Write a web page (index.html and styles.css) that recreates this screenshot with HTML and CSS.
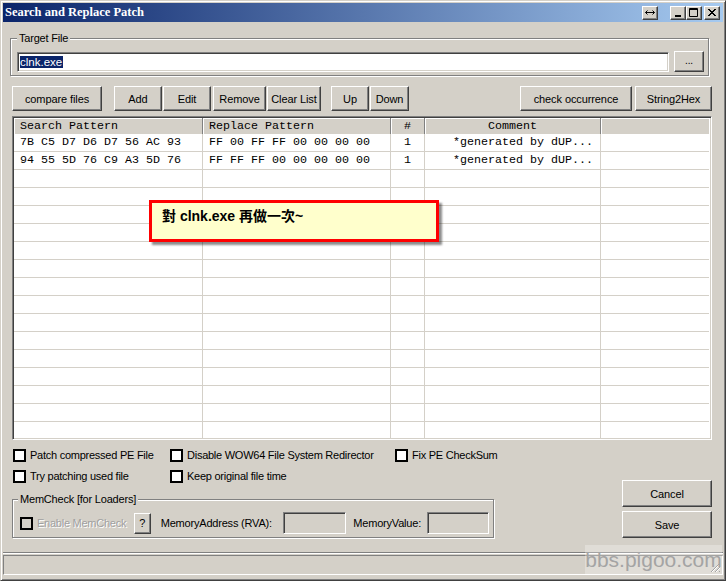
FILE: index.html
```html
<!DOCTYPE html>
<html>
<head>
<meta charset="utf-8">
<title>Search and Replace Patch</title>
<link rel="stylesheet" href="styles.css">
</head>
<body>
<div class="window">
  <div class="titlebar">
    <span class="title">Search and Replace Patch</span>
    <span class="tbtn tb-resize"><svg width="10" height="7" viewBox="0 0 10 7"><path d="M0.5 3.5H9.5M2.5 1.5L0.5 3.5L2.5 5.5M7.5 1.5L9.5 3.5L7.5 5.5" stroke="#000" fill="none"/></svg></span>
    <span class="tbtn tb-min"><svg width="10" height="9" viewBox="0 0 10 9"><rect x="2" y="7" width="6" height="2" fill="#000"/></svg></span>
    <span class="tbtn"><svg width="10" height="9" viewBox="0 0 10 9"><path d="M0.5 0.5H8.5V8.5H0.5Z" stroke="#000" fill="none"/><rect x="0" y="1" width="9" height="1" fill="#000"/></svg></span>
    <span class="tbtn tb-close"><svg width="10" height="9" viewBox="0 0 10 9"><path d="M1 1L8 8M2 1L9 8M8 1L1 8M9 1L2 8" stroke="#000" fill="none"/></svg></span>
  </div>

  <div class="client">
    <div class="group target">
      <div class="legend">Target File</div>
      <div class="target-row">
        <div class="field"><span class="sel">clnk.exe</span></div>
        <div class="btn browse">...</div>
      </div>
    </div>

    <div class="toolbar">
      <div class="btn b-compare">compare files</div>
      <div class="btn b-add">Add</div>
      <div class="btn b-edit">Edit</div>
      <div class="btn b-remove">Remove</div>
      <div class="btn b-clear">Clear List</div>
      <div class="btn b-up">Up</div>
      <div class="btn b-down">Down</div>
      <div class="spacer"></div>
      <div class="btn b-check">check occurrence</div>
      <div class="btn b-s2h">String2Hex</div>
    </div>

    <div class="list">
      <table class="grid">
        <colgroup><col class="c1"><col class="c2"><col class="c3"><col class="c4"><col class="c5"></colgroup>
        <thead>
          <tr><th class="l">Search Pattern</th><th class="l">Replace Pattern</th><th>#</th><th>Comment</th><th class="last"></th></tr>
        </thead>
        <tbody>
          <tr><td class="l">7B C5 D7 D6 D7 56 AC 93</td><td class="l">FF 00 FF FF 00 00 00 00</td><td class="n">1</td><td class="cm">*generated by dUP...</td><td></td></tr>
          <tr><td class="l">94 55 5D 76 C9 A3 5D 76</td><td class="l">FF FF FF 00 00 00 00 00</td><td class="n">1</td><td class="cm">*generated by dUP...</td><td></td></tr>
          <tr><td></td><td></td><td></td><td></td><td></td></tr>
          <tr><td></td><td></td><td></td><td></td><td></td></tr>
          <tr><td></td><td></td><td></td><td></td><td></td></tr>
          <tr><td></td><td></td><td></td><td></td><td></td></tr>
          <tr><td></td><td></td><td></td><td></td><td></td></tr>
          <tr><td></td><td></td><td></td><td></td><td></td></tr>
          <tr><td></td><td></td><td></td><td></td><td></td></tr>
          <tr><td></td><td></td><td></td><td></td><td></td></tr>
          <tr><td></td><td></td><td></td><td></td><td></td></tr>
          <tr><td></td><td></td><td></td><td></td><td></td></tr>
          <tr><td></td><td></td><td></td><td></td><td></td></tr>
          <tr><td></td><td></td><td></td><td></td><td></td></tr>
          <tr><td></td><td></td><td></td><td></td><td></td></tr>
          <tr><td></td><td></td><td></td><td></td><td></td></tr>
          <tr><td></td><td></td><td></td><td></td><td></td></tr>
        </tbody>
      </table>
    </div>

    <div class="bottom">
      <div class="opts">
        <div class="checkrow">
          <label class="opt w1"><span class="cb"></span><span>Patch compressed PE File</span></label>
          <label class="opt w2"><span class="cb"></span><span>Disable WOW64 File System Redirector</span></label>
          <label class="opt"><span class="cb"></span><span>Fix PE CheckSum</span></label>
        </div>
        <div class="checkrow">
          <label class="opt w1"><span class="cb"></span><span>Try patching used file</span></label>
          <label class="opt w2"><span class="cb"></span><span>Keep original file time</span></label>
        </div>
        <div class="group mem">
          <div class="legend">MemCheck [for Loaders]</div>
          <div class="mem-row">
            <label class="opt disabled w-mc"><span class="cb"></span><span>Enable MemCheck</span></label>
            <div class="btn qbtn">?</div>
            <span class="mlabel ml-addr">MemoryAddress (RVA):</span>
            <div class="minput mi-addr"></div>
            <span class="mlabel ml-val">MemoryValue:</span>
            <div class="minput mi-val"></div>
          </div>
        </div>
      </div>
      <div class="actions">
        <div class="btn act">Cancel</div>
        <div class="btn act">Save</div>
      </div>
    </div>
  </div>

  <div class="separator"></div>
  <div class="statusbar">
    <div class="panel">
      <svg class="grip" width="11" height="11" viewBox="0 0 11 11">
        <path d="M10 1L1 10M10 5L5 10M10 9L9 10" stroke="#808080" fill="none"/>
        <path d="M10 2L2 10M10 6L6 10" stroke="#fff" fill="none"/>
      </svg>
    </div>
  </div>

  <div class="callout">對 clnk.exe 再做一次~</div>
  <div class="watermark">bbs.pigoo.com</div>
</div>
</body>
</html>
```

FILE: styles.css
```css
* { box-sizing: border-box; }
html, body { margin: 0; padding: 0; }
body {
  width: 726px;
  height: 581px;
  overflow: hidden;
  background: #d4d0c8;
  font-family: "Liberation Sans", Arial, sans-serif;
  font-size: 11px;
  color: #000;
}

.window {
  position: relative;
  width: 726px;
  height: 581px;
  border: 1px solid;
  border-color: #d4d0c8 #404040 #404040 #d4d0c8;
  box-shadow: inset 1px 1px #fff, inset -1px -1px #808080;
  padding: 2px;
  display: flex;
  flex-direction: column;
  background: #d4d0c8;
}

/* Title bar */
.titlebar {
  height: 19px;
  flex: none;
  background: linear-gradient(to right, #0a246a, #a6caf0);
  display: flex;
  align-items: center;
  padding: 0 3px 0 2px;
}
.title {
  flex: 1;
  color: #fff;
  font-family: "Liberation Serif", "Times New Roman", serif;
  font-weight: bold;
  font-size: 12.5px;
  line-height: 19px;
}
.tbtn {
  width: 16px;
  height: 14px;
  background: #d4d0c8;
  border: 1px solid;
  border-color: #fff #404040 #404040 #fff;
  box-shadow: inset -1px -1px #808080;
  display: flex;
  align-items: center;
  justify-content: center;
}
.tb-resize { margin-right: 12px; }
.tb-close { margin-left: 2px; }

/* Client area */
.client {
  flex: none;
  padding: 0 11px 0 9px;
}

.group {
  border: 1px solid #808080;
  box-shadow: 1px 1px 0 #fff, inset 1px 1px 0 #fff;
}
.legend {
  width: fit-content;
  margin-top: -8px;
  margin-left: 0;
  padding: 0 2px;
  line-height: 14px;
  height: 14px;
  background: #d4d0c8;
  letter-spacing: -0.2px;
}
.mem .legend { margin-left: -2px; }

.target {
  margin: 16px 3px 0 -2px;
  padding: 0 4px 3px 6px;
}
.target-row {
  margin-top: 6px;
  height: 21px;
  display: flex;
  align-items: center;
  gap: 5px;
}
.field {
  flex: 1;
  height: 20px;
  align-self: flex-start;
  margin-top: 1px;
  background: #fff;
  border: 1px solid;
  border-color: #808080 #fff #fff #808080;
  box-shadow: inset 1px 1px #404040, inset -1px -1px #d4d0c8;
  padding: 2px 0 0 2px;
  line-height: 14px;
  font-size: 11.5px;
}
.sel {
  background: #0a246a;
  color: #fff;
  padding: 0 1px 0 0;
}

/* Buttons */
.btn {
  background: #d4d0c8;
  border: 1px solid;
  border-color: #fff #404040 #404040 #fff;
  box-shadow: inset -1px -1px #808080;
  display: flex;
  align-items: center;
  justify-content: center;
  font-size: 11px;
  letter-spacing: -0.1px;
  white-space: nowrap;
}
.browse { width: 30px; height: 21px; font-size: 10px; padding-bottom: 2px; }

.toolbar {
  margin-top: 10px;
  height: 25px;
  display: flex;
}
.toolbar .btn { height: 25px; }
.spacer { flex: 1; }
.b-compare { width: 90px; }
.b-add { width: 48px; margin-left: 12px; }
.b-edit { width: 48px; margin-left: 1px; }
.b-remove { width: 53px; margin-left: 2px; }
.b-clear { width: 54px; margin-left: 1px; }
.b-up { width: 38px; margin-left: 10px; }
.b-down { width: 39px; margin-left: 1px; }
.b-check { width: 112px; }
.b-s2h { width: 77px; margin-left: 3px; }

/* List */
.list {
  margin-top: 5px;
  height: 324px;
  background: #fff;
  border: 1px solid;
  border-color: #808080 #fff #fff #808080;
  box-shadow: inset 1px 1px #404040, inset -1px -1px #d4d0c8;
  padding: 1px 1px 1px 1px;
  overflow: hidden;
}
.grid {
  table-layout: fixed;
  width: 695px;
  border-collapse: separate;
  border-spacing: 0;
  font-family: "Liberation Mono", "Courier New", monospace;
  font-size: 11.67px;
}
.c1 { width: 189px; }
.c2 { width: 188px; }
.c3 { width: 34px; }
.c4 { width: 176px; }
.c5 { width: 108px; }
.grid th {
  height: 16px;
  line-height: 16px;
  padding: 0;
  font-weight: normal;
  text-align: center;
  background: #d4d0c8;
  border-right: 1px solid #808080;
  box-shadow: inset 1px 1px #fff;
  white-space: nowrap;
  overflow: hidden;
}
.grid th.l, .grid td.l { text-align: left; padding-left: 6px; }
.grid th.last { border-right: none; }
.grid td {
  line-height: 17px;
  height: 18px;
  padding: 0;
  border-right: 1px solid #d4d0c8;
  border-bottom: 1px solid #d4d0c8;
  white-space: nowrap;
  overflow: hidden;
}
.grid td:last-child { border-right: none; }
.grid td.n { text-align: center; }
.grid td.cm { padding-left: 28px; }

/* Bottom */
.bottom {
  padding-top: 5px;
  display: flex;
  align-items: flex-end;
}
.opts { flex: 1; }
.checkrow {
  height: 20px;
  margin-bottom: 1px;
  display: flex;
  align-items: center;
  padding-left: 1px;
}
.opt {
  display: flex;
  align-items: center;
  white-space: nowrap;
  letter-spacing: -0.25px;
}
.opt.w1 { width: 157px; }
.opt.w2 { width: 225px; }
.cb {
  width: 13px;
  height: 13px;
  border: 2px solid #000;
  background: #fff;
  margin-right: 4px;
  flex: none;
}
.mem {
  margin-top: 13px;
  width: 482px;
  padding: 0 4px 3px 7px;
}
.mem-row {
  margin-top: 6px;
  height: 22px;
  display: flex;
  align-items: center;
}
.opt.disabled { color: #a0a0a0; text-shadow: 1px 1px #fff; }
.opt.disabled .cb { background: #d4d0c8; }
.w-mc { width: 114px; }
.qbtn { width: 17px; height: 21px; }
.mlabel { white-space: nowrap; letter-spacing: -0.2px; }
.ml-addr { width: 123px; margin-left: 10px; }
.ml-val { width: 74px; margin-left: 7px; }
.minput {
  height: 22px;
  border: 1px solid;
  border-color: #808080 #fff #fff #808080;
  box-shadow: inset 1px 1px #404040;
  background: #d4d0c8;
}
.mi-addr { width: 63px; }
.mi-val { width: 62px; }

.actions {
  display: flex;
  flex-direction: column;
  gap: 4px;
}
.act { width: 90px; height: 27px; }

/* Status bar */
.separator {
  flex: none;
  margin-top: 14px;
  height: 2px;
  border-top: 1px solid #808080;
  border-bottom: 1px solid #fff;
}
.statusbar {
  flex: none;
  margin-top: 1px;
  height: 20px;
}
.panel {
  height: 20px;
  border: 1px solid;
  border-color: #808080 #fff #fff #808080;
  display: flex;
  justify-content: flex-end;
  align-items: flex-end;
}
.grip { margin: 0 1px 1px 0; }

/* Overlays */
.callout {
  position: absolute;
  left: 148px;
  top: 199px;
  width: 290px;
  height: 42px;
  border: 3px solid #ff0000;
  background: #ffffcc;
  box-shadow: 3px 3px 2px rgba(0, 0, 0, 0.45);
  padding: 3px 0 0 10px;
  font-family: "Liberation Sans", "Noto Sans CJK TC", sans-serif;
  font-weight: bold;
  font-size: 14px;
  line-height: 20px;
}
.watermark {
  position: absolute;
  left: 584px;
  top: 544px;
  width: 137px;
  height: 30px;
  background: rgba(255, 255, 255, 0.28);
  color: #a4a4a4;
  font-size: 21px;
  line-height: 30px;
  text-align: center;
}
```
